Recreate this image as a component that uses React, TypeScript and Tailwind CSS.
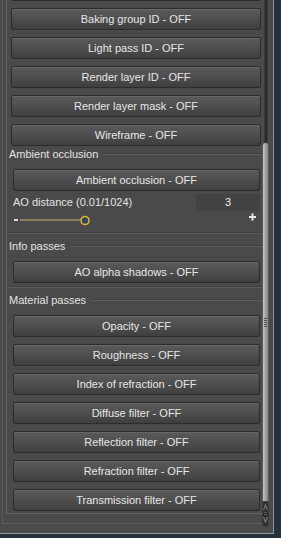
const FONT = { fontFamily: '"Liberation Sans", Arial, sans-serif' };

const TOP_BUTTONS = [
  "",
  "Baking group ID - OFF",
  "Light pass ID - OFF",
  "Render layer ID - OFF",
  "Render layer mask - OFF",
  "Wireframe - OFF",
];

const MATERIAL_BUTTONS = [
  "Opacity - OFF",
  "Roughness - OFF",
  "Index of refraction - OFF",
  "Diffuse filter - OFF",
  "Reflection filter - OFF",
  "Refraction filter - OFF",
  "Transmission filter - OFF",
];

function PassButton({ label }: { label: string }) {
  return (
    <div className="h-[22px] shrink-0 flex items-center justify-center rounded-[2px] border border-[#2c2c2c] bg-gradient-to-b from-[#5a5a5a] via-[#4e4e4e] to-[#3f3f3f] shadow-[inset_0_1px_0_#676767] text-[11px] text-[#e6e6e6]">
      {label}
    </div>
  );
}

function Heading({ title }: { title: string }) {
  return (
    <div className="h-[16px] flex items-center gap-[5px] pl-[2px] text-[11px] text-[#e2e2e2]">
      <span className="whitespace-nowrap">{title}</span>
      <div className="flex-1 h-0 border-t border-b border-t-[#404040] border-b-[#5e5e5e]" />
    </div>
  );
}

function Separator() {
  return <div className="h-0 border-t border-b border-t-[#3f3f3f] border-b-[#5c5c5c]" />;
}

function AoSlider() {
  return (
    <svg width="246" height="18" viewBox="0 0 246 18" className="block">
      <rect x="1" y="8" width="4" height="2" fill="#dcdcdc" />
      <rect x="7" y="8" width="63" height="2" fill="#8d7d5a" />
      <circle cx="72" cy="9.5" r="4" fill="#33475a" stroke="#e0b031" strokeWidth="1.6" />
      <rect x="236" y="5" width="7" height="2" fill="#e8e8e8" />
      <rect x="238.5" y="2.5" width="2" height="7" fill="#e8e8e8" />
    </svg>
  );
}

function ScrollBar() {
  return (
    <div className="w-[7px] h-[527px] flex flex-col">
      <div className="h-[143px] flex justify-center">
        <div className="w-[4px] h-full bg-[#2b2b2b] border-x border-[#3a3a3a]" />
      </div>
      <div className="h-[358px] rounded-t-[3px] bg-gradient-to-r from-[#c4c4c4] via-[#a4a4a4] to-[#858585] flex flex-col items-center justify-center gap-[1px] border-x border-[#5a5a5a]">
        <div className="w-[3px] h-[1px] bg-[#555]" />
        <div className="w-[3px] h-[1px] bg-[#555]" />
        <div className="w-[3px] h-[1px] bg-[#555]" />
        <div className="w-[3px] h-[1px] bg-[#555]" />
        <div className="w-[3px] h-[1px] bg-[#555]" />
      </div>
      <div className="h-[26px] rounded-[3px] bg-[#2f2f2f] border border-[#3c3c3c]">
        <svg width="5" height="24" viewBox="0 0 5 24" className="block">
          <path d="M0.5 8 L2.5 3 L4.5 8" fill="none" stroke="#7a7a7a" strokeWidth="1.2" />
          <path d="M0.5 15 L2.5 20 L4.5 15" fill="none" stroke="#7a7a7a" strokeWidth="1.2" />
          <rect x="1" y="10" width="3" height="1" fill="#555" />
          <rect x="1" y="12" width="3" height="1" fill="#555" />
        </svg>
      </div>
    </div>
  );
}

export default function App() {
  return (
    <div className="w-[281px] h-[538px] bg-[#27313b] overflow-hidden" style={FONT}>
      <div className="w-[274px] h-[534px] bg-[#4a4a4a] border-r border-b border-[#8e969f] flex overflow-hidden">
        <div className="w-[262px]">
          <div className="ml-[2px] w-[260px] h-[524px] border-l border-b border-[#595959]">
            <div className="ml-[3px] h-[514px] border-l border-b border-[#626262] overflow-hidden">
              <div className="-mt-[21px] pl-[4px] pr-[1px] flex flex-col gap-[7px]">
                {TOP_BUTTONS.map((b, i) => (
                  <PassButton key={i} label={b} />
                ))}
              </div>

              <Heading title="Ambient occlusion" />
              <div className="pl-[6px] pr-[2px]">
                <div className="mt-[7px]">
                  <PassButton label="Ambient occlusion - OFF" />
                </div>
                <div className="mt-[2px] h-[18px] flex items-center justify-between text-[11px] text-[#e2e2e2]">
                  <span>AO distance (0.01/1024)</span>
                  <div className="w-[64px] h-[17px] bg-[#434343] flex items-center justify-center text-[#ececec]">
                    3
                  </div>
                </div>
                <AoSlider />
              </div>
              <div className="mt-[3px] pl-[1px]">
                <Separator />
              </div>

              <div className="mt-[4px]">
                <Heading title="Info passes" />
              </div>
              <div className="pl-[6px] pr-[2px] mt-[7px]">
                <PassButton label="AO alpha shadows - OFF" />
              </div>
              <div className="mt-[3px] pl-[1px]">
                <Separator />
              </div>

              <div className="mt-[4px]">
                <Heading title="Material passes" />
              </div>
              <div className="pl-[6px] pr-[2px] mt-[7px] flex flex-col gap-[7px]">
                {MATERIAL_BUTTONS.map((b) => (
                  <PassButton key={b} label={b} />
                ))}
              </div>
            </div>
          </div>
        </div>
        <ScrollBar />
      </div>
    </div>
  );
}
